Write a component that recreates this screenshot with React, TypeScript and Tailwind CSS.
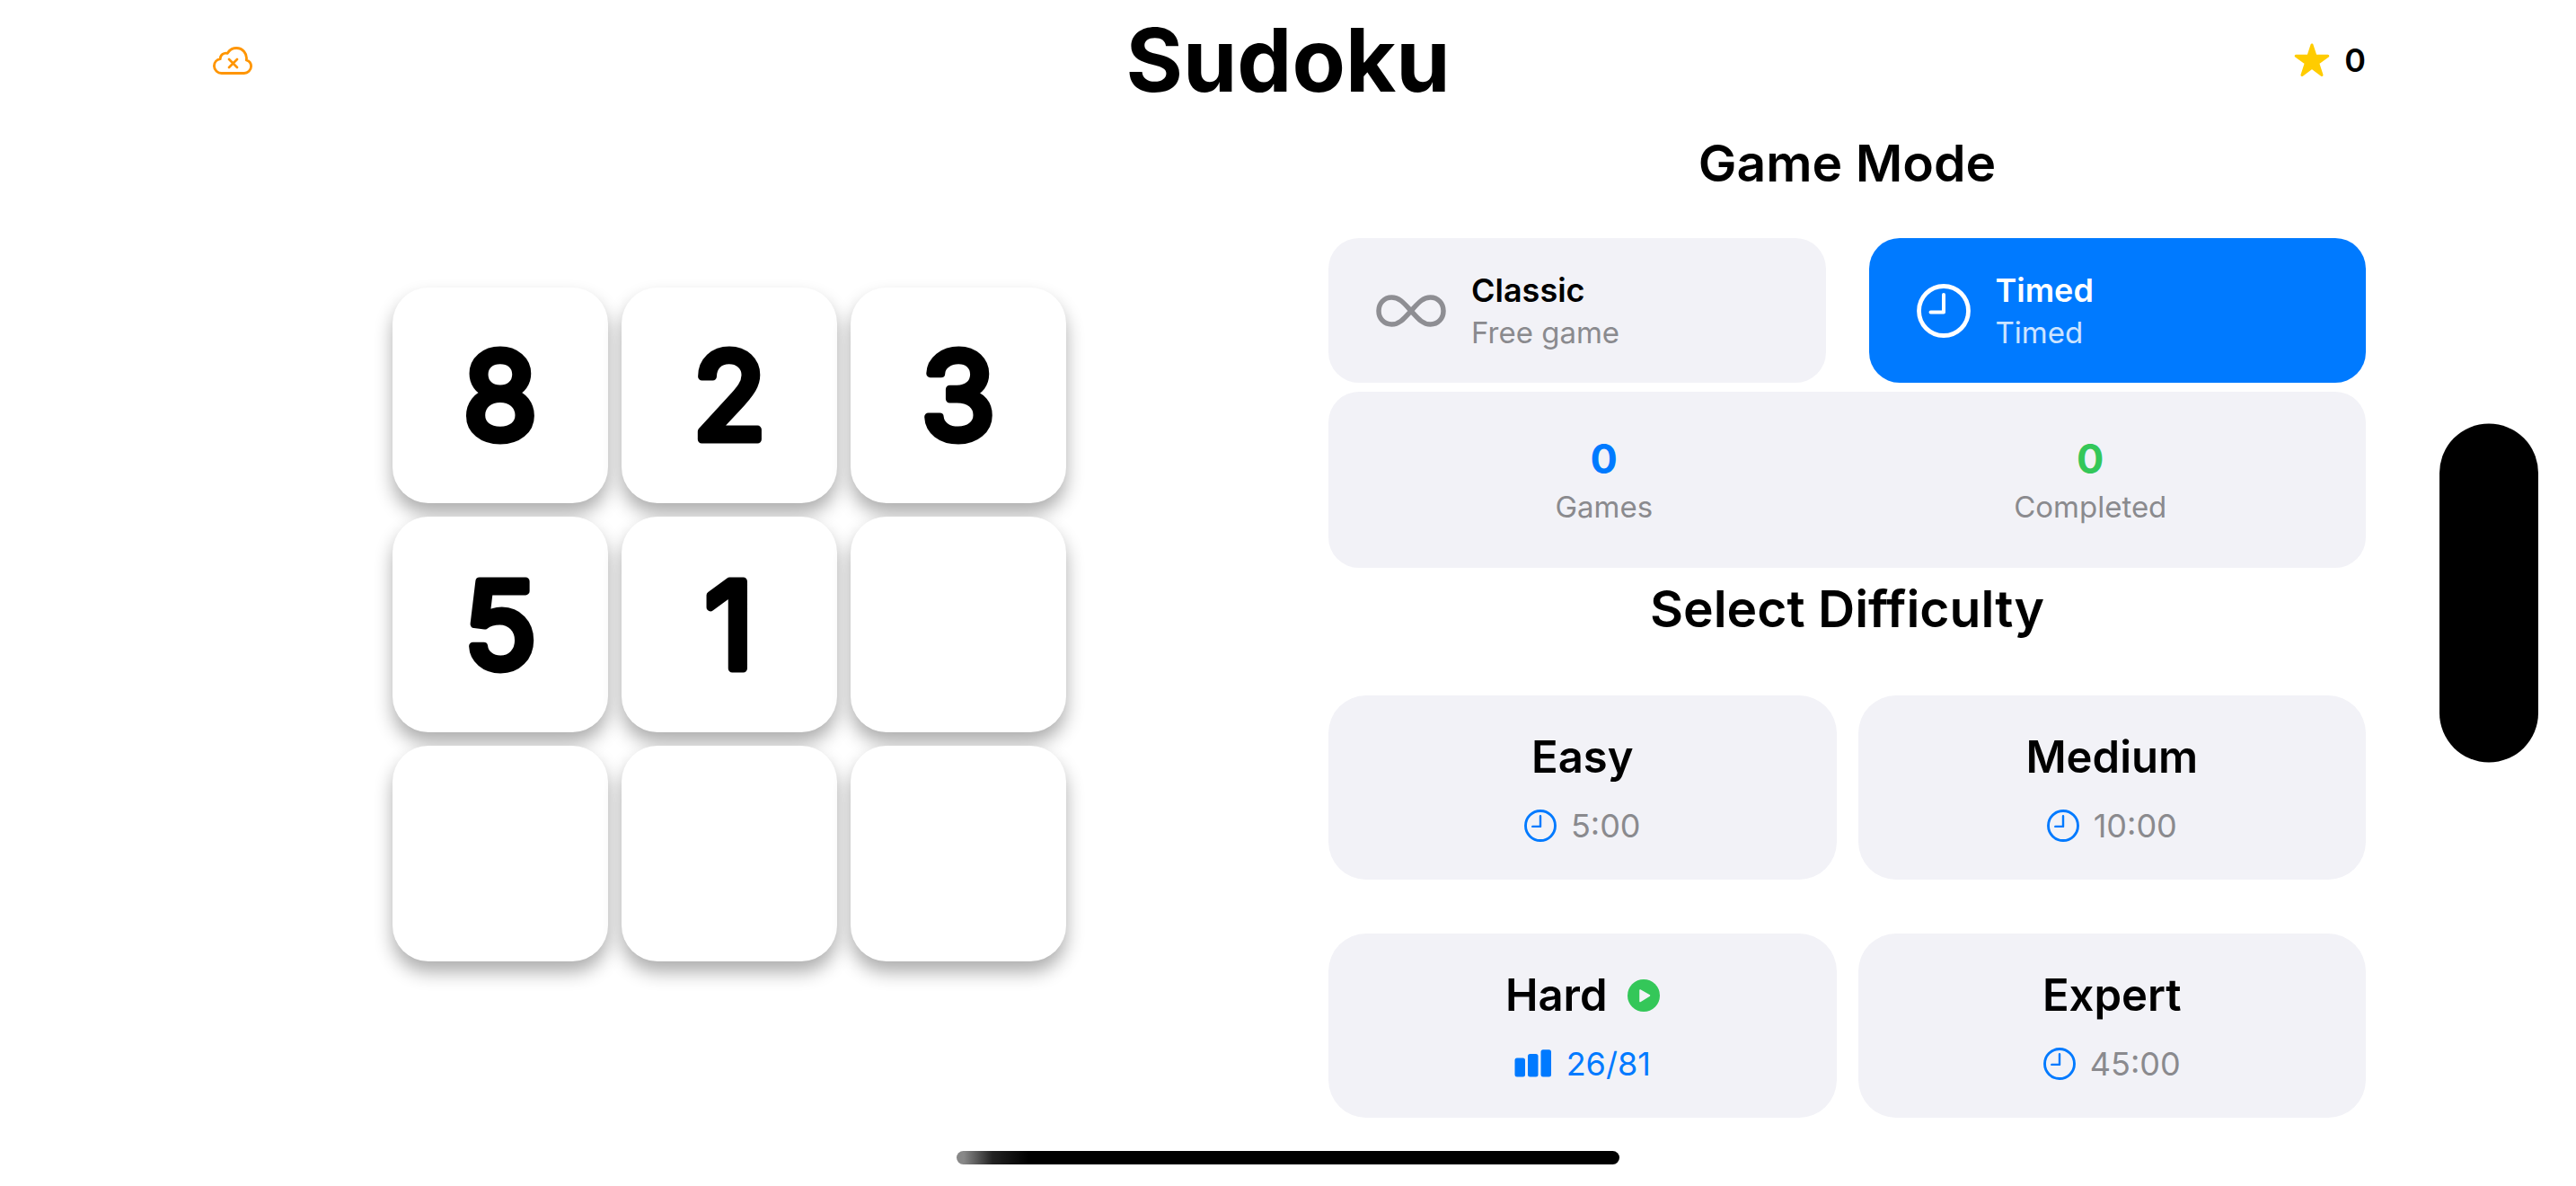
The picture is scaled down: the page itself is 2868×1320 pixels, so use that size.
import React from "react";

type IconProps = { className?: string };

function CloudOffIcon({ className }: IconProps) {
  return (
    <svg viewBox="0 0 44 31" className={className} fill="none" stroke="currentColor" strokeLinecap="round" strokeLinejoin="round" aria-hidden="true">
      <path
        d="M10 29.5H34.5A7.8 7.8 0 0 0 42.6 21.8A7.4 7.4 0 0 0 37.3 14.8A11.3 11.3 0 0 0 26 1.5C21.600 1.500 18.200 3.800 16.300 7.400A6.300 6.300 0 0 0 8.200 13.600A8.100 8.100 0 0 0 1.400 21.400A8.300 8.300 0 0 0 10 29.500Z"
        strokeWidth="2.8"
      />
      <path d="M18 14L27 23M27 14L18 23" strokeWidth="2.6" />
    </svg>
  );
}

function StarIcon({ className }: IconProps) {
  return (
    <svg viewBox="0 0 40 40" className={className} fill="currentColor" stroke="currentColor" strokeWidth="3" strokeLinejoin="round" aria-hidden="true">
      <path d="M20 3L24 15.200H37.800L26.700 23.300L31 36.500L20 28.400L9 36.500L13.300 23.300L2.200 15.200H16Z" />
    </svg>
  );
}

function InfinityIcon({ className }: IconProps) {
  return (
    <svg viewBox="0 0 78 36" className={className} fill="none" stroke="currentColor" strokeWidth="5.500" strokeLinecap="round" strokeLinejoin="round" aria-hidden="true">
      <path d="M39 18C32 10.500 26.500 3 17.500 3C9 3 3 9.500 3 18S9 33 17.500 33C26.500 33 32 25.500 39 18C46 10.500 51.500 3 60.500 3C69 3 75 9.500 75 18S69 33 60.500 33C51.500 33 46 25.500 39 18Z" />
    </svg>
  );
}

function ClockIcon({ className }: IconProps) {
  return (
    <svg viewBox="0 0 60 60" className={className} fill="none" stroke="currentColor" strokeLinecap="round" strokeLinejoin="round" aria-hidden="true">
      <circle cx="30" cy="30" r="27.500" strokeWidth="4.800" />
      <path d="M30 12V31.500H15.500" strokeWidth="4" />
    </svg>
  );
}

function PlayBadgeIcon({ className }: IconProps) {
  return (
    <svg viewBox="0 0 36 36" className={className} aria-hidden="true">
      <circle cx="18" cy="18" r="18" fill="#34c759" />
      <path d="M14 12L24.500 18L14 24.500Z" fill="#f2f2f7" stroke="#f2f2f7" strokeWidth="1.500" strokeLinejoin="round" />
    </svg>
  );
}

function BarsIcon({ className }: IconProps) {
  return (
    <svg viewBox="0 0 42 31" className={className} fill="currentColor" aria-hidden="true">
      <rect x="0.500" y="9.500" width="11.500" height="21" rx="2.500" />
      <rect x="15" y="5" width="11.500" height="25.500" rx="2.500" />
      <rect x="29.500" y="0.300" width="11.500" height="30.200" rx="2.500" />
    </svg>
  );
}

const tiles = ["8", "2", "3", "5", "1", "", "", "", ""];

/* A digit thickened by a round-joined stroke, which gives it soft corners. */
function RoundedDigit({ digit }: { digit: string }) {
  return (
    <svg viewBox="0 0 240 240" className="size-full">
      <text
        x="120"
        y="169"
        textAnchor="middle"
        fill="black"
        stroke="black"
        strokeWidth="9"
        strokeLinejoin="round"
        className="text-[134px] font-normal [font-optical-sizing:none]"
      >
        {digit}
      </text>
    </svg>
  );
}

function Board() {
  return (
    <div className="grid grid-cols-3 gap-[15px]">
      {tiles.map((digit, i) => (
        <div key={i} className="size-60 rounded-[40px] bg-white shadow-[0_12px_20px_rgba(0,0,0,0.32)]">
          {digit && <RoundedDigit digit={digit} />}
        </div>
      ))}
    </div>
  );
}

type ModeProps = { title: string; subtitle: string; icon: React.ReactNode; active?: boolean };

function ModeButton({ title, subtitle, icon, active = false }: ModeProps) {
  return (
    <button
      type="button"
      aria-pressed={active}
      className={
        active
          ? "flex h-[161px] items-center gap-7 rounded-[34px] bg-[#007aff] px-[53px] text-left text-white"
          : "flex h-[161px] items-center gap-7 rounded-[34px] bg-[#f2f2f7] px-[53px] text-left text-black"
      }
    >
      {icon}
      <span className="flex flex-col">
        <span className="text-4xl leading-[48px] font-semibold">{title}</span>
        <span className={active ? "text-[33px] leading-[46px] text-white/80" : "text-[33px] leading-[46px] text-[#8a8a8e]"}>{subtitle}</span>
      </span>
    </button>
  );
}

function Stat({ value, label, color }: { value: string; label: string; color: string }) {
  return (
    <div className="flex flex-col items-center">
      <dd className={color}>{value}</dd>
      <dt className="order-last text-[33px] leading-[46px] text-[#8a8a8e]">{label}</dt>
    </div>
  );
}

type Level = { name: string; detail: string; inProgress?: boolean };

const levels: Level[] = [
  { name: "Easy", detail: "5:00" },
  { name: "Medium", detail: "10:00" },
  { name: "Hard", detail: "26/81", inProgress: true },
  { name: "Expert", detail: "45:00" },
];

function LevelButton({ name, detail, inProgress = false }: Level) {
  return (
    <button type="button" className="flex h-[205px] flex-col items-center justify-center gap-5 rounded-[42px] bg-[#f2f2f7]">
      <span className="flex items-center gap-[22px] text-[49px] leading-[64px] font-semibold">
        {name}
        {inProgress && <PlayBadgeIcon className="size-9" />}
      </span>
      <span className="flex items-center gap-4 text-4xl leading-[48px] text-[#8a8a8e]">
        {inProgress ? <BarsIcon className="h-[31px] w-[42px] text-[#007aff]" /> : <ClockIcon className="size-9 text-[#007aff]" />}
        <span className={inProgress ? "text-[#007aff]" : ""}>{detail}</span>
      </span>
    </button>
  );
}

export default function App() {
  return (
    <div className="relative flex min-h-screen flex-col bg-white font-[Inter,sans-serif] text-black">
      <header className="grid h-[134px] grid-cols-[1fr_auto_1fr] items-center px-[234px]">
        <button type="button" aria-label="Cloud sync unavailable" className="justify-self-start px-[3px] text-[#ff9500]">
          <CloudOffIcon className="h-[31px] w-11" />
        </button>
        <h1 className="text-[97px] leading-[120px] font-bold">Sudoku</h1>
        <p className="flex items-center gap-4 justify-self-end text-4xl font-semibold">
          <StarIcon className="size-10 text-[#ffcc00]" />
          <span>0</span>
        </p>
      </header>

      <main className="grid flex-1 grid-cols-2 gap-[90px] px-[234px] pt-3">
        <section aria-label="Board" className="flex items-start justify-center pt-[174px]">
          <Board />
        </section>

        <section className="flex flex-col">
          <h2 className="text-center text-[57px] leading-[72px] font-semibold">Game Mode</h2>
          <div className="mt-[47px] grid grid-cols-2 gap-12">
            <ModeButton title="Classic" subtitle="Free game" icon={<InfinityIcon className="h-9 w-[78px] text-[#8e8e93]" />} />
            <ModeButton title="Timed" subtitle="Timed" icon={<ClockIcon className="size-[60px]" />} active />
          </div>
          <dl className="mt-[10px] grid h-[196px] grid-cols-2 content-center rounded-[34px] bg-[#f2f2f7] px-9">
            <Stat value="0" label="Games" color="text-[45px] leading-[60px] font-bold text-[#007aff]" />
            <Stat value="0" label="Completed" color="text-[45px] leading-[60px] font-bold text-[#34c759]" />
          </dl>
          <h2 className="mt-[10px] text-center text-[57px] leading-[72px] font-semibold">Select Difficulty</h2>
          <div className="mt-[60px] grid grid-cols-2 gap-x-6 gap-y-[60px]">
            {levels.map((level) => (
              <LevelButton key={level.name} {...level} />
            ))}
          </div>
        </section>
      </main>

      <div className="absolute top-1/2 right-[42px] h-[377px] w-[110px] -translate-y-1/2 rounded-full bg-black" />
      <div className="absolute bottom-6 left-1/2 h-[15px] w-[738px] -translate-x-1/2 rounded-full bg-[linear-gradient(to_right,#888_0,#888_8px,#222_40px,#000_80px)]" />
    </div>
  );
}
